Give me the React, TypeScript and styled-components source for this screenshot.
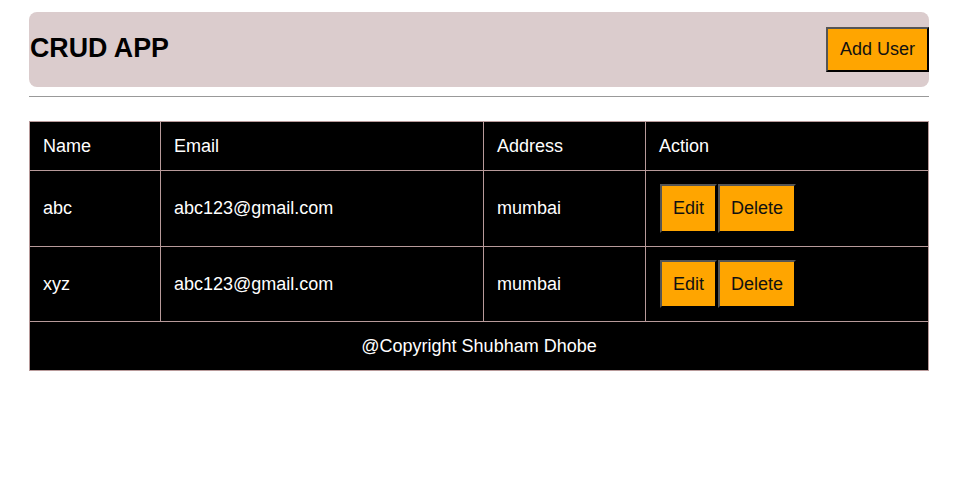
import styled, { createGlobalStyle } from 'styled-components'

const GlobalStyle = createGlobalStyle`
  body {
    margin: 0;
    background: #fff;
    font-family: "Liberation Sans", Arial, sans-serif;
  }
`

const users = [
  { name: 'abc', email: 'abc123@gmail.com', address: 'mumbai' },
  { name: 'xyz', email: 'abc123@gmail.com', address: 'mumbai' },
]

function App() {
  return (
    <>
      <GlobalStyle />
      <Page>
        <Header>
          <h1>CRUD APP</h1>
          <OrangeButton $big>Add User</OrangeButton>
        </Header>
        <Divider />
        <Table>
          <colgroup>
            <col style={{ width: 131 }} />
            <col style={{ width: 323 }} />
            <col style={{ width: 162 }} />
            <col />
          </colgroup>
          <thead>
            <tr>
              <Cell as="th">Name</Cell>
              <Cell as="th">Email</Cell>
              <Cell as="th">Address</Cell>
              <Cell as="th">Action</Cell>
            </tr>
          </thead>
          <tbody>
            {users.map((u, i) => (
              <tr key={i}>
                <Cell>{u.name}</Cell>
                <Cell>{u.email}</Cell>
                <Cell>{u.address}</Cell>
                <Cell>
                  <Actions>
                    <OrangeButton>Edit</OrangeButton>
                    <OrangeButton>Delete</OrangeButton>
                  </Actions>
                </Cell>
              </tr>
            ))}
            <tr>
              <Footer colSpan={4}>@Copyright Shubham Dhobe</Footer>
            </tr>
          </tbody>
        </Table>
      </Page>
    </>
  )
}

const Page = styled.div`
  width: 900px;
  margin: 12px 0 0 29px;
`

const Header = styled.div`
  display: flex;
  align-items: center;
  justify-content: space-between;
  height: 75px;
  background-color: #dbcccd;
  border-radius: 8px;
  h1 {
    margin: -2px 0 0 1px;
    font-size: 26.8px;
    font-weight: bold;
    color: #000;
  }
`

const OrangeButton = styled.button<{ $big?: boolean }>`
  font-family: "Liberation Sans", Arial, sans-serif;
  font-size: 18px;
  line-height: ${p => (p.$big ? '21px' : '22.5px')};
  color: #111;
  background-color: #ffa500;
  border: 2px outset #555;
  border-right-color: #111;
  border-bottom-color: #111;
  padding: ${p => (p.$big ? '10px 12px' : '11px 11px')};
  cursor: pointer;
`

const Divider = styled.hr`
  margin: 9px 0 24px;
  border: none;
  border-top: 1px solid #999;
`

const Table = styled.table`
  width: 900px;
  table-layout: fixed;
  border-collapse: collapse;
  background-color: #000;
  color: #fff;
  border: 1px solid #b89a9a;
`

const Cell = styled.td`
  border: 1px solid #b89a9a;
  padding: 13px 13px;
  font-size: 18px;
  line-height: 22px;
  font-weight: normal;
  text-align: left;
`

const Actions = styled.div`
  display: flex;
  gap: 1px;
  margin-left: 1px;
`

const Footer = styled.td`
  border: 1px solid #b89a9a;
  padding: 13px;
  font-size: 18px;
  line-height: 22px;
  text-align: center;
`

export default App
